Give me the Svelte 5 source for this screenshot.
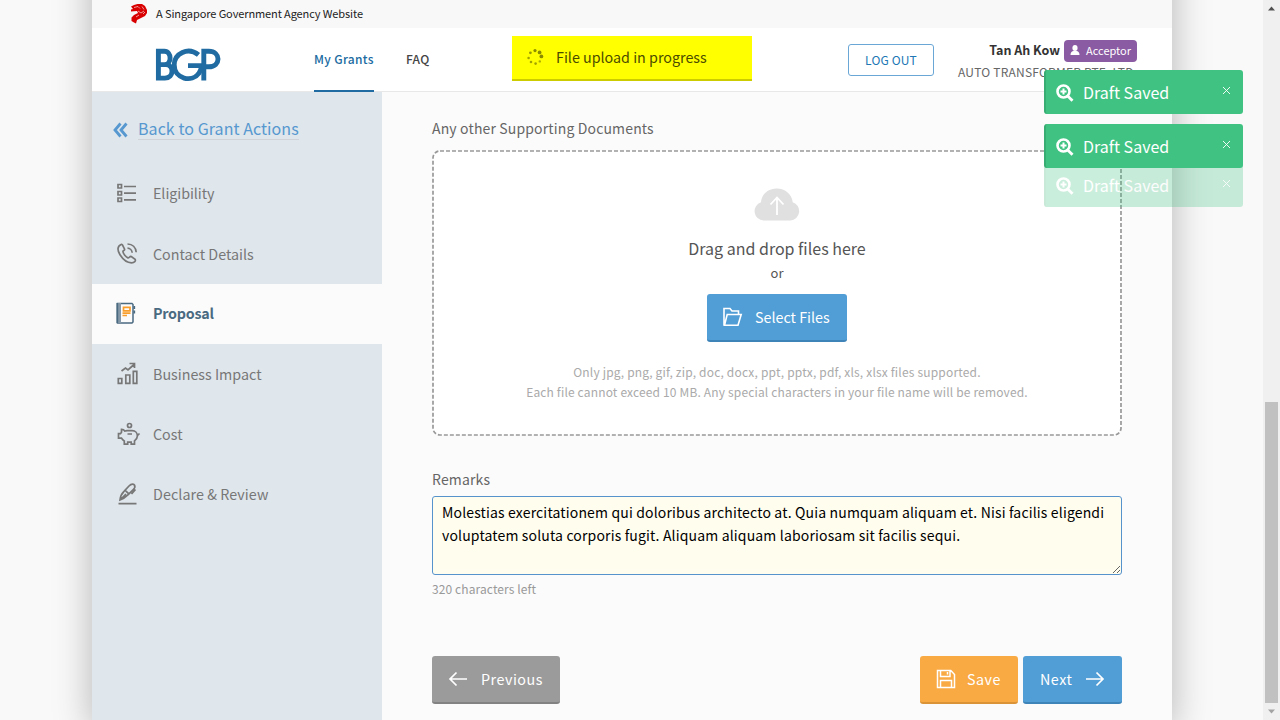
<script lang="ts">
  const items = [
    { id: 'eligibility', label: 'Eligibility' },
    { id: 'contact', label: 'Contact Details' },
    { id: 'proposal', label: 'Proposal' },
    { id: 'impact', label: 'Business Impact' },
    { id: 'cost', label: 'Cost' },
    { id: 'declare', label: 'Declare & Review' }
  ];
  const toasts = ['first', 'second', 'leaving'];
  const dots = [
    [8, 1.6, 1.6, 1], [12.6, 3.4, 1.9, 1], [14.4, 7.4, 1.9, 1], [12.8, 12.4, 1.2, .7],
    [8.6, 14.6, 1.3, .8], [4, 13, 1.3, .8], [1.6, 9, 1.3, .8], [3.4, 3.8, 1.4, .9]
  ];
  const remarks = 'Molestias exercitationem qui doloribus architecto at. Quia numquam aliquam et. Nisi facilis eligendi voluptatem soluta corporis fugit. Aliquam aliquam laboriosam sit facilis sequi.';
</script>

<div class="screen">
  <div class="frame">
    <div class="gov">
      <svg width="18" height="21" viewBox="0 0 18 21"><path fill="#d80000" d="M1 3.500 4 2 7.500 1H12l3 2 2 4v3l-2 3-4 2-4 2-1 3.500-2-1L1.500 18v-3.500L4 12l4-2-1-2-6 .5v-2L3 6z"/><path d="m4 4.500 4-1 2 2m2-2 2 3m-6 1.500 3 2 3-2m-5 4-3 2m7-3 2-2" fill="none" stroke="#fff" stroke-width=".6"/></svg>
      <span>A Singapore Government Agency Website</span>
    </div>

    <header>
      <svg class="logo" width="66" height="34" viewBox="0 0 66 34" fill="none" stroke="#206ba1" stroke-width="4.900"><path d="M3.400 3.300v26.800h6.500c9.300 0 9.300-13.500 1-13.500H3.400h6c7.600 0 7.600-13.300 0-13.300z"/><path d="M43.500 6.900C33-1.900 19.200 5.800 19.200 16.800c0 14.500 18 18 24.800 8.300 1.700-2.400 2.400-4.800 2.400-7.500H33"/><path d="M48.800 32.500V3.300h5c12.300 0 12.300 15.500 0 15.500h-5"/></svg>
      <nav><a class="on" href="#grants">My Grants</a><a class="faq" href="#faq">FAQ</a></nav>
      <div class="upload">
        <svg width="17" height="17" viewBox="0 0 17 17">{#each dots as d}<circle cx={d[0]} cy={d[1]} r={d[2]} fill="#8c8c00" opacity={d[3]}/>{/each}</svg>
        <span>File upload in progress</span>
      </div>
      <button class="logout">LOG OUT</button>
      <div class="user">
        <div class="who"><b>Tan Ah Kow</b><span class="badge"><svg width="10" height="11" viewBox="0 0 10 11" fill="#fff"><ellipse cx="5" cy="3.100" rx="2.600" ry="3"/><path d="M.5 10c0-2.600 1.500-3.600 3-3.900h3c1.500.3 3 1.300 3 3.900z"/></svg><i>Acceptor</i></span></div>
        <div class="company">AUTO TRANSFORMER PTE. LTD.</div>
      </div>
    </header>

    <div class="body">
      <aside>
        <a class="back" href="#back"><svg width="15" height="16" viewBox="0 0 15 16" fill="none" stroke="#5698cf" stroke-width="2.800"><path d="M7.500 1.500 2 8l5.500 6.500M13.500 1.500 8 8l5.500 6.500"/></svg><span>Back to Grant Actions</span></a>
        {#each items as item}
          <a class="item {item.id}" href="#{item.id}">
            <svg width="24" height="24" viewBox="0 0 24 24" fill="none" stroke="#777" stroke-width="1.700">
              {#if item.id === 'eligibility'}
                <path d="M2 2.500h3.500V6H2zM2 9.500h3.500V13H2zM2 16h3.500v3.500H2zM8 4.500h12M8 11.200h12M8 17.800h12"/>
              {:else if item.id === 'contact'}
                <path d="M5 2.500c-4 2-3.700 6-1 10.300 3 4.700 7 8 11.500 8 3 0 4.500-2 3.600-3.500l-3.800-2.800c-1.800-.5-2 1.700-3.400 1.400-2-.8-4.700-4.200-5-6.200-.1-1.200 2-1.200 1.700-2.500L6.500 3c-.5-.6-1-.8-1.500-.5zM11.500 6.200c2.500 0 4.500 2 4.700 4.500M11.500 2c5 .2 8.300 3.500 8.700 8.300"/>
              {:else if item.id === 'proposal'}
                <path stroke="#4a6a81" stroke-width="1.500" d="M1.500 1.500h14.500l1 1v17.500l-1 1H1.500z"/><path stroke="#8498a7" stroke-width="3" d="M3.500 1v20"/><path stroke="#4a6a81" d="M1.300 1v20M18.300 4v3M18.300 8.500v3"/><path stroke="#f99d2b" d="M7.500 5.300h6.500v3.500H7.500zM6.500 11.200h8M6.500 13.500h4.500"/>
              {:else if item.id === 'impact'}
                <path d="M2.300 16.500h3.500v4.800H2.300zM9.800 13h4v8.300h-4zM17.300 9.300h3.500v12h-3.500zM5.500 9l4-3 2.500 2 6-5.500M13.500 1.500h5v4.500"/>
              {:else if item.id === 'cost'}
                <circle cx="12.500" cy="3.500" r="2"/><path d="M10 8.700h5.200c3.300 0 5.200 2.500 5.200 5.200 0 2.300-1.500 3.700-2.900 4.900v3.300h-3.300v-1.900h-3.500v1.900H7.300V19c-1.400-.8-2.300-1.800-2.800-2.800H1.500v-4.500h2l1-1.500V7.300c1.600 0 2.700.6 3.300 1.800zM10.500 12h4.500M20.500 13.500l2-2"/>
              {:else}
                <path d="M2.500 21.700h18M4 18c.3-4 1.300-6 4-8.700l5-5.300c2.500-2.600 5.200-2 5.500-.8.800 1.300.3 3-1.500 4.600l-4.800 4.800C9.500 15.200 7.500 16.700 4 18zM4 18l6-6M9 8.200l4 4M19.500 7.500 15.500 12"/>
              {/if}
            </svg>
            <span>{item.label}</span>
          </a>
        {/each}
      </aside>

      <main>
        <div class="label docs">Any other Supporting Documents</div>
        <div class="drop">
          <svg class="border" width="690" height="286"><rect x="1" y="1" width="688" height="284" rx="7" fill="#fff" stroke="#999" stroke-width="1.700" stroke-dasharray="4 2"/></svg>
          <svg class="cloud" width="46" height="33" viewBox="0 0 46 33"><path fill="#e0e0e0" d="M9.500 32.500a9.400 9.400 0 0 1-2.500-18.300C7.500 6.500 14 .5 22.700.5s15.200 5.800 16 13.700a9.400 9.400 0 0 1-2.200 18.300z"/><path d="M23 27V10M16.500 16.500l6.500-7 6.500 7" fill="none" stroke="#fff" stroke-width="1.800"/></svg>
          <div class="drag">Drag and drop files here</div>
          <div class="or">or</div>
          <button class="btn select"><svg width="20" height="20" viewBox="0 0 20 20" fill="none" stroke="#fff" stroke-width="1.600"><path d="M1 18.500V1.500h6l2 2.500h6.500v3M1.500 18.300 4.200 7.500h14L15 18.300z"/></svg><span>Select Files</span></button>
          <div class="hint h1">Only jpg, png, gif, zip, doc, docx, ppt, pptx, pdf, xls, xlsx files supported.</div>
          <div class="hint h2">Each file cannot exceed 10 MB. Any special characters in your file name will be removed.</div>
        </div>
        <div class="label remarks">Remarks</div>
        <textarea value={remarks} spellcheck="false"></textarea>
        <div class="left">320 characters left</div>
        <div class="actions">
          <button class="btn prev"><svg width="20" height="16" viewBox="0 0 20 16" fill="none" stroke="#fff" stroke-width="1.700"><path d="M19 8H2M8.500 1.500 2 8l6.500 6.500"/></svg><span>Previous</span></button>
          <button class="btn save"><svg width="20" height="20" viewBox="0 0 20 20" fill="none" stroke="#fff" stroke-width="1.500"><path d="M1.500 1.500h13.300L18.500 5.500v13h-17zM4.500 1.500v6h9.500v-6M11.500 3v2.500M4.500 18.500v-7h11v7"/></svg><span>Save</span></button>
          <button class="btn next"><span>Next</span><svg width="20" height="16" viewBox="0 0 20 16" fill="none" stroke="#fff" stroke-width="1.700"><path d="M1 8h17M11.500 1.500 18 8l-6.500 6.500"/></svg></button>
        </div>
      </main>
    </div>
  </div>

  <div class="toasts">
    {#each toasts as t}
      <div class="toast {t}">
        <svg width="19" height="19" viewBox="0 0 19 19" fill="none" stroke="#fff"><circle cx="7.500" cy="7.500" r="6" stroke-width="2.600"/><path d="m11.700 12 4.800 4.800" stroke-width="2.800"/><path d="M7.500 4.500v6M4.500 7.500h6" stroke-width="2"/></svg>
        <span>Draft Saved</span>
        <svg class="x" width="9" height="9" viewBox="0 0 9 9" stroke="#fff" stroke-width=".9"><path d="m1 1 7 7M8 1 1 8"/></svg>
      </div>
    {/each}
  </div>

  <div class="scroll">
    <svg width="17" height="17"><path d="m5 10.500 3.500-4 3.500 4z" fill="#505050"/></svg>
    <div class="thumb"></div>
    <svg width="17" height="17"><path d="m5 6.500 3.500 4 3.500-4z" fill="#a3a3a3"/></svg>
  </div>
</div>

<style>
  :global(body) { overflow: hidden; }
  .screen, .screen * { box-sizing: border-box; }
  .screen { width: 1280px; height: 720px; position: relative; overflow: hidden; background: #f9f9f9; padding-left: 92px; font-family: "Noto Sans CJK SC", "Noto Sans", sans-serif; color: #555; white-space: nowrap; }
  .frame { width: 1080px; height: 790px; margin-top: -60px; padding-top: 60px; background: #fbfbfb; box-shadow: 0 0 36px rgba(0,0,0,.28); display: flex; flex-direction: column; }
  a { text-decoration: none; color: inherit; }
  svg { display: block; flex: none; }
  button { font: inherit; border: 0; padding: 0; }
  .gov { height: 28px; background: #f8f8f8; display: flex; padding: 3px 0 0 38px; font-size: 11px; line-height: 20px; color: #222; }
  .gov span { margin-left: 8px; letter-spacing: -.1px; }
  header { height: 64px; background: #fff; border-bottom: 1px solid #e8e8e8; display: flex; align-items: flex-start; }
  .logo { margin: 20px 0 0 63px; }
  nav { display: flex; gap: 32px; margin-left: 93px; font-size: 12px; font-weight: 500; color: #444; letter-spacing: .33px; }
  nav a { height: 64px; line-height: 62px; width: 60px; }
  nav .on { color: #206ba1; border-bottom: 2px solid #206ba1; }
  nav .faq { width: 24px; }
  .upload { width: 240px; height: 45px; margin: 8px 0 0 82px; background: #ff0; border-bottom: 2px solid #cc0; display: flex; padding: 13px 0 0 15px; font-size: 14.300px; line-height: 17px; color: #4b4b00; }
  .upload span { margin: -1px 0 0 12px; }
  .logout { width: 86px; height: 32px; margin: 16px 0 0 96px; border: 1px solid #6aa6d6; border-radius: 3px; background: #fff; color: #2077b4; font-size: 12px; letter-spacing: .15px; line-height: 30px; }
  .user { width: 179px; margin: 12px 0 0 24px; }
  .who { display: flex; justify-content: flex-end; font-size: 12.500px; line-height: 20px; color: #333; }
  .badge { width: 73px; height: 22px; margin-left: 4px; border-radius: 4px; background: #8a5aa2; color: #fff; display: flex; padding: 5px 0 0 6px; font-size: 11px; line-height: 12px; }
  .badge i { font-style: normal; margin: -1px 0 0 6px; }
  .company { font-size: 12px; letter-spacing: .22px; line-height: 20px; color: #666; }
  .body { flex: 1; display: flex; }
  aside { width: 290px; background: #dfe6ec; padding-top: 24px; font-size: 14.300px; color: #777; }
  .back { display: flex; height: 24px; padding: 6px 0 0 21px; margin-bottom: 48px; color: #5698cf; font-size: 16px; letter-spacing: .06px; }
  .back span { margin: -5px 0 0 10px; line-height: 22px; height: 23px; border-bottom: 1px solid #d0d4d8; }
  .item { display: flex; align-items: center; height: 60px; padding-left: 24px; line-height: 24px; }
  .item span { margin-left: 13px; }
  .eligibility { margin-top: -24px; }
  .eligibility span { margin-top: -2px; letter-spacing: -.05px; }
  .cost { padding-left: 25px; }
  .cost span { margin-left: 12px; }
  .declare { letter-spacing: .07px; }
  .proposal { background: #fbfbfb; color: #4a6a81; font-weight: 700; letter-spacing: -.25px; }
  .proposal span { margin-top: -2px; }
  main { width: 690px; margin-left: 50px; display: flex; flex-direction: column; }
  .label { font-size: 14px; line-height: 22px; color: #666; letter-spacing: .15px; }
  .docs { margin-top: 25px; }
  .drop { height: 286px; margin-top: 11px; position: relative; display: flex; flex-direction: column; align-items: center; }
  .border { position: absolute; inset: 0; }
  .drop > :not(.border) { position: relative; }
  .cloud { margin-top: 38px; }
  .drag { font-size: 16px; line-height: 24px; margin-top: 15px; }
  .or { font-size: 13px; line-height: 22px; margin-top: 2px; }
  .btn { height: 48px; border-radius: 3px; color: #fff; background: #519dd5; border-bottom: 2px solid #3f84b9; display: flex; align-items: center; font-size: 14.300px; line-height: 24px; }
  .select { width: 140px; margin-top: 10px; padding-left: 16px; gap: 12px; }
  .hint { font-size: 12px; line-height: 20px; color: #aaa; letter-spacing: .16px; }
  .h1 { margin-top: 20px; letter-spacing: .18px; }
  .remarks { margin-top: 32px; }
  textarea { display: block; width: 690px; height: 79px; margin: 6px 0 0; padding: 4px 9px; border: 1px solid #5693cc; border-radius: 3px; background: #fffdee; color: #000; font: 14px/23px "Noto Sans CJK SC", sans-serif; letter-spacing: .155px; outline: 0; overflow: hidden; }
  .left { font-size: 12px; line-height: 20px; margin-top: 4px; color: #999; letter-spacing: .1px; }
  .actions { display: flex; margin-top: 57px; }
  .actions .btn { letter-spacing: .5px; }
  .prev { width: 128px; background: #9b9b9b; border-color: #828282; padding-left: 16px; gap: 13px; }
  .save { width: 98px; margin-left: auto; background: #f9aa43; border-color: #db9338; padding-left: 16px; gap: 11px; }
  .next { width: 99px; margin-left: 5px; padding-left: 17px; gap: 13px; }
  .toasts { position: absolute; left: 1044px; top: 70px; width: 199px; display: flex; flex-direction: column; }
  .toast { height: 44px; margin-bottom: 10px; background: #40c382; border-left: 2px solid #38ad73; border-radius: 3px; color: #fff; display: flex; padding: 14px 0 0 10px; font-size: 16px; line-height: 24px; position: relative; z-index: 1; }
  .toast span { margin: -4px 0 0 8px; }
  .toast .x { margin: 2px 12px 0 auto; }
  .leaving { margin-top: -15px; opacity: .27; z-index: 0; }
  .scroll { position: absolute; right: 0; top: 0; width: 17px; height: 720px; background: #f0f0f0; display: flex; flex-direction: column; }
  .thumb { width: 13px; height: 301px; margin: 385px 0 0 2px; background: #c1c1c1; }
</style>
